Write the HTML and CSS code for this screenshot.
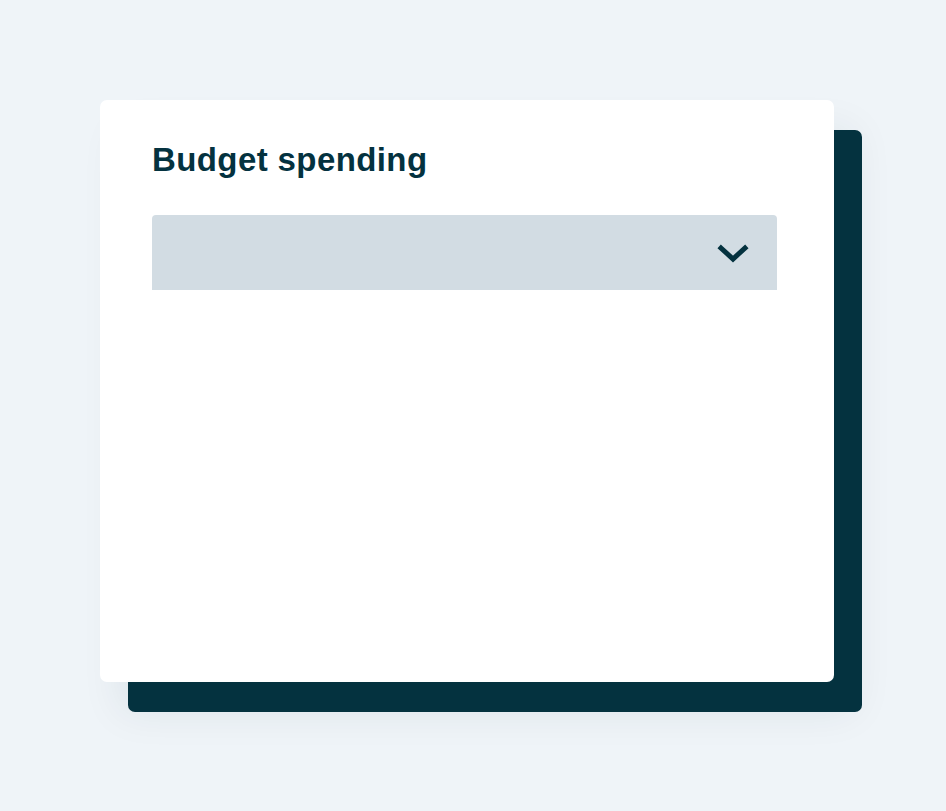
FILE: index.html
```html
<!DOCTYPE html>
<html lang="en">
<head>
  <meta charset="UTF-8">
  <title>Budget spending</title>
  <link rel="stylesheet" href="styles.css">
</head>
<body>

  <div class="card">
    <h2 class="card-title">Budget spending</h2>

    <div class="select-box">
      <svg class="chevron" width="32" height="20" viewBox="0 0 32 20">
        <path d="M4 4 L16 15 L28 4" fill="none" stroke="#04323f" stroke-width="5" stroke-linecap="square"/>
      </svg>
    </div>
  </div>

</body>
</html>
```

FILE: styles.css
```css
body {
  margin: 0;
  padding: 100px;
  background-color: #eff4f8;
  font-family: "Liberation Sans", Arial, sans-serif;
  color: #04323f;
}

.card {
  width: 734px;
  height: 582px;
  box-sizing: border-box;
  padding: 40px 57px 0 52px;
  background-color: #ffffff;
  border-radius: 7px;
  box-shadow: 28px 30px 0 #04323f, 20px 30px 40px rgba(4, 50, 63, 0.08);
}

.card-title {
  margin: 0;
  font-size: 33px;
  line-height: 40px;
  font-weight: bold;
  letter-spacing: 0.4px;
}

.select-box {
  margin-top: 35px;
  height: 75px;
  background-color: #d2dce3;
  border-radius: 4px 4px 0 0;
  display: flex;
  align-items: center;
  justify-content: flex-end;
  padding-right: 28px;
}

.chevron {
  display: block;
  margin-top: 3px;
}
```
